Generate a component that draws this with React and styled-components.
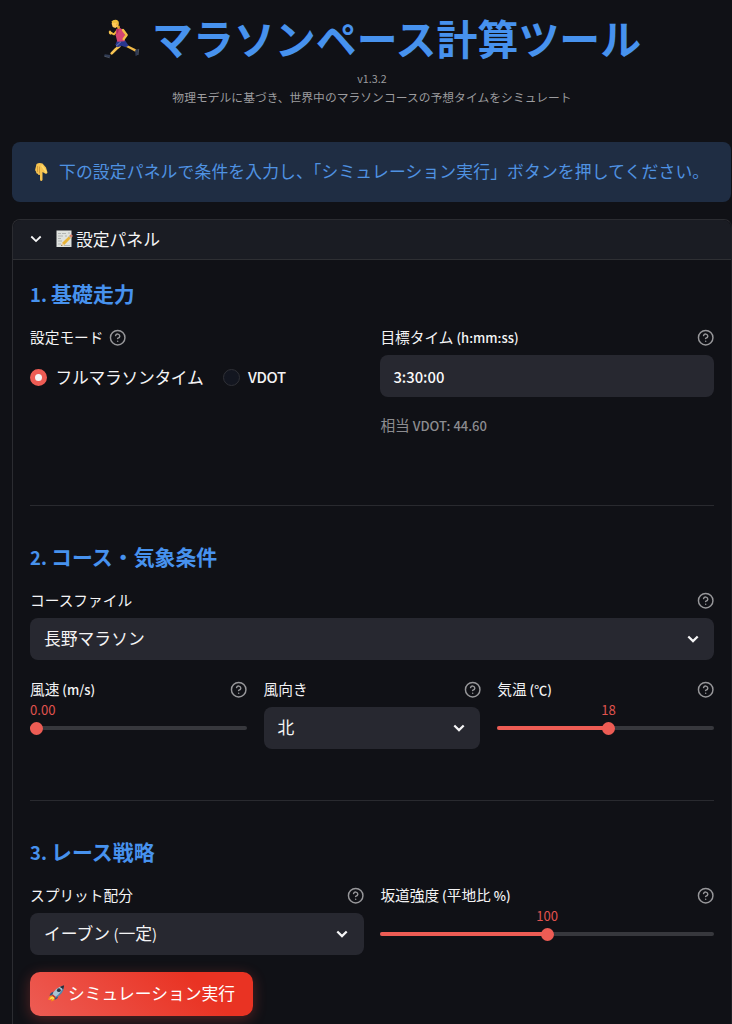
import React, { useState } from 'react'
import styled, { createGlobalStyle } from 'styled-components'

const GlobalStyle = createGlobalStyle`
* {
  box-sizing: border-box;
}
body {
  margin: 0;
  height: 1024px;
  overflow: hidden;
  background: #101116;
  color: #f4f4f5;
  font-family: "Noto Sans CJK JP", "Noto Sans", sans-serif;
  font-size: 16.8px;
}
`
const Page = styled.main`
width: 732px;
height: 1024px;
overflow: hidden;
padding-left: 12px;
display: flex;
flex-direction: column;
`
const Header = styled.header`
height: 142px;
flex: none;
display: flex;
flex-direction: column;
align-items: center;
`
const Title = styled.h1`
margin: 0 0 1px 91px;
height: 69px;
padding-top: 7px;
display: flex;
gap: 12px;
align-items: center;
align-self: flex-start;
color: #4792ee;
font-size: 40.9px;
font-weight: 700;
line-height: 60px;
letter-spacing: 0.05px;
white-space: nowrap;
`
const Caption = styled.p`
margin: 0;
font-size: ${props => props.$size || 11.75}px;
line-height: 18px;
letter-spacing: 0.05px;
color: #9c9c9f;
white-space: nowrap;
`
const Latin = styled.span`
font-size: 0.885em;
font-weight: ${props => props.$weight || 'inherit'};
`
const Notice = styled.div`
height: 60px;
width: 719px;
flex: none;
padding: 0 0 2px 21px;
display: flex;
align-items: center;
gap: 9px;
border-radius: 8px;
background: #1f2d43;
color: #4f92e2;
line-height: 24px;
letter-spacing: 0.15px;
white-space: nowrap;
svg {
  margin-top: 2px;
}
`
const Expander = styled.section`
width: 720px;
height: 900px;
flex: none;
margin-top: 17px;
border: 1px solid #2b2c31;
border-right-color: #1f2025;
border-radius: 8px;
`
const Summary = styled.div`
height: 40px;
padding: 0 17px 2px;
display: flex;
align-items: center;
border-bottom: 1px solid #2e2f33;
border-radius: 8px 8px 0 0;
background: #1a1c23;
line-height: 24px;
svg:first-child {
  margin-right: 14px;
}
svg:nth-child(2) {
  margin-right: 3px;
}
`
const Content = styled.div`
padding: 0 17px;
`
const Section = styled.section`
height: ${props => props.$height}px;
border-bottom: ${props => props.$last ? 'none' : '1px solid #292a2f'};
padding-top: ${props => props.$top}px;
`
const Heading = styled.h2`
margin: 0 0 17px;
font-size: 20.9px;
font-weight: 700;
line-height: 28px;
color: #4792ee;
`
const Columns = styled.div`
display: grid;
grid-template-columns: repeat(${props => props.$count}, 1fr);
column-gap: 16.8px;
margin-top: ${props => props.$top || 0}px;
`
const Field = styled.div`
min-width: 0;
`
const Label = styled.div`
height: 25px;
margin-bottom: ${props => props.$tight ? 0 : 5}px;
padding-bottom: 1px;
display: flex;
align-items: center;
justify-content: ${props => props.$inline ? 'flex-start' : 'space-between'};
gap: 6px;
font-size: 14.7px;
line-height: 22px;
white-space: nowrap;
svg {
  margin: 2px -0.5px 0 0;
}
`
const Input = styled.input`
display: block;
width: 100%;
height: 42px;
padding: 0 13px;
border: none;
outline: none;
border-radius: 8px;
background: #272830;
color: #fafafa;
font-family: inherit;
font-size: 14.8px;
font-weight: 500;
`
const SelectBox = styled.div`
height: 42px;
padding: 0 15.5px 2px 14px;
display: flex;
align-items: center;
justify-content: space-between;
border-radius: 8px;
background: #272830;
white-space: nowrap;
span {
  line-height: 24px;
}
svg {
  margin-top: 2px;
}
`
const Equivalent = styled.p`
margin: 17px 0 0;
font-size: 14.7px;
line-height: 22px;
color: #8c8c90;
`
const RadioGroup = styled.div`
height: 42px;
padding-top: 2px;
display: flex;
align-items: center;
gap: 19px;
`
const RadioLabel = styled.label`
display: flex;
align-items: center;
gap: 8.5px;
cursor: pointer;
line-height: 24px;
letter-spacing: -0.3px;
`
const RadioDot = styled.span`
width: 17px;
height: 17px;
border-radius: 50%;
border: ${props => props.$checked ? '5.5px solid #ed5c54' : '1px solid #2f3036'};
background: ${props => props.$checked ? '#f4f4f5' : '#131620'};
`
const SliderValue = styled.div`
height: 16px;
display: flex;
font-size: 13.1px;
line-height: 16px;
color: #e0534e;
span {
  transform: ${props => props.$start ? 'none' : 'translateX(-50%)'};
}
`
const Track = styled.div`
height: 4px;
margin-top: 8px;
display: flex;
align-items: center;
border-radius: 2px;
background: #37383d;
`
const Filled = styled.div`
height: 4px;
border-radius: 2px;
background: #ed5c54;
`
const Thumb = styled.div`
width: 13px;
height: 13px;
flex: none;
margin: 0 -6.5px;
border-radius: 50%;
background: #ed5c54;
`
const RunButton = styled.button`
margin-top: 17px;
width: 223px;
height: 44px;
padding: 0 0 2px;
display: flex;
align-items: center;
justify-content: center;
gap: 3px;
border: none;
border-radius: 10px;
background: linear-gradient(45deg, #ed5c54, #e93323 75%);
box-shadow: 0 3px 14px rgba(237, 75, 65, 0.32);
color: #ffffff;
font-family: inherit;
font-size: 16.8px;
white-space: nowrap;
cursor: pointer;
`

function HelpIcon() {
  return (
    <svg width="17.4" height="17.4" viewBox="0 0 24 24" fill="none" stroke="#97979a" strokeWidth="2" strokeLinecap="round" strokeLinejoin="round">
      <circle cx="12" cy="12" r="10" />
      <path d="M9.09 9a3 3 0 0 1 5.83 1c0 2-3 3-3 3" />
      <path d="M12 17h.01" />
    </svg>
  )
}

function Chevron({ width = 2.2 }) {
  return (
    <svg width="12" height="8" viewBox="0 0 12 8" fill="none" stroke="#f6f6f7" strokeWidth={width}>
      <path d="M1.3 1.5 6 6.1l4.7-4.6" />
    </svg>
  )
}

function RunnerIcon() {
  return (
    <svg width="37" height="41" viewBox="24 24 111 123" fill="none" strokeLinecap="round" strokeLinejoin="round">
      <path d="M66 62 57 73 47 68" stroke="#eeb43c" strokeWidth="6" />
      <path d="M41 65 45 61 51 68 48 74 43 72Z" fill="#f7c44e" />
      <path d="M95 108 107 114 121 121" stroke="#f1ba47" strokeWidth="7" />
      <path d="M73 109 63 117 50 130" stroke="#f7c453" strokeWidth="8" />
      <path d="m121 119 8-2-1 17-6 5-1-8Z" fill="#303b54" />
      <path d="m29 133 17 2-1 7-17-4Z" fill="#303b54" />
      <path d="m29 139 14 4M131 118l-2 16" stroke="#8592a6" strokeWidth="1.5" />
      <path d="M66 92 90 91 101 107 92 112 80 107 68 112 61 104Z" fill="#29378e" />
      <path d="m77 96-13 12" stroke="#7185bd" strokeWidth="3" />
      <path d="M64 57 75 54 85 59 91 77 89 94 67 95 62 76Z" fill="#d44472" />
      <path d="m65 57 7-3-2 12-5 8Z" fill="#b32b62" />
      <path d="m84 60 11 15-9 12" stroke="#f3bd46" strokeWidth="7" />
      <path d="m64 48 10-1 1 8-6 3Z" fill="#dfa02e" />
      <path d="M52 33 61 31 70 34 70 48 61 54 53 51 50 41Z" fill="#ffc957" />
      <path d="M49 35q7-8 17-5 8 5 4 17l-4-2v-7l-13 1Z" fill="#eebe39" />
      <path d="m64 41 3-1v6l-4 1Z" fill="#e8a23b" />
    </svg>
  )
}

function PointDownIcon() {
  return (
    <svg width="17" height="20" viewBox="0 0 17 20">
      <path d="M3.500 2Q6 .2 9.500 1.500l3.500 4 1.500 5q-.5 2-2.500 1l-2.500-1.500v8q-.8 1.700-2 .8-.5-.5-.5-1.800V12.500Q5.500 14 4.800 11.800 3 12 3 9.500 2 9 2.200 7.500Z" fill="#f6c350" />
      <path d="M4.500 4.500v5M6.500 5v6" stroke="#cc9235" strokeWidth=".8" strokeLinecap="round" />
      <path d="m9 4 3.500 5 .5 1.300" fill="none" stroke="#ffdb6c" strokeWidth="1.600" strokeLinecap="round" />
    </svg>
  )
}

function MemoIcon() {
  return (
    <svg width="17" height="18" viewBox="0 0 17 18">
      <rect x=".5" y=".5" width="15" height="16.500" fill="#dfe2df" />
      <path d="M2 3.500h3M6 3.500h4M12 3h2M2 6h5M9 6h2M2 8.500h3M2 11h4M2 14h3M8 15.500h6" stroke="#a4aaa8" strokeWidth=".8" />
      <path d="m14.300 5 1.900 1.800-7.700 8-3.200 1.200.9-3.300Z" fill="#e9b437" />
      <path d="m13.300 5.900 1.300-1.300q1.200-.5 2 .8l.1.900-1.300 1.300Z" fill="#db806c" />
      <path d="m12.600 6.600.8-.8 2 1.900-.8.8Z" fill="#b2b9bd" />
      <path d="m6.200 12.700 2.200 2.100L5.300 16Z" fill="#edcfa0" />
      <path d="m5.600 15 .8.700-1.300.4Z" fill="#3c3b38" />
    </svg>
  )
}

function RocketIcon() {
  return (
    <svg width="17" height="17" viewBox="0 0 18 18">
      <path d="M5 10Q1 11 0 16l4-1-1 2.500Q8 17 8 13Z" fill="#f58a1c" />
      <path d="M5 12q-3 1-3.500 3.500L5 14l-1 2q3-1 3-3.500Z" fill="#ffe24a" />
      <path d="m6 7-3 1.500-1.500 3L5 10.500ZM11 11l-1 3-3 2 .5-3.500Z" fill="#30547d" />
      <path d="M4.500 10.500Q7 3 16.500.5 17 8 8 13.500Z" fill="#a9c4d4" />
      <path d="M7.500 12.800Q14.500 8 16.300 1 17.500 9 8 13.500Z" fill="#5685a9" />
      <path d="M12.500 2Q14.500.8 17 .3q0 2.200-.8 4.200Z" fill="#292d38" />
      <circle cx="11.500" cy="5.500" r="2" fill="#26394b" />
      <path d="m4.500 10.500 3.500 3" stroke="#bd3433" strokeWidth="1.700" />
    </svg>
  )
}

function FieldLabel({ children, help = true, inline, tight }) {
  return (
    <Label $inline={inline} $tight={tight}>
      <span>{children}</span>
      {help && <HelpIcon />}
    </Label>
  )
}

function Select({ label, children }) {
  return (
    <Field>
      <FieldLabel>{label}</FieldLabel>
      <SelectBox>
        <span>{children}</span>
        <Chevron />
      </SelectBox>
    </Field>
  )
}

function Slider({ label, value, min, max }) {
  const ratio = (Number(value) - min) / (max - min)
  // the thumb stays inside both ends of the track
  const place = `calc(6.3px + (100% - 12.6px) * ${ratio})`

  return (
    <Field>
      <FieldLabel tight>{label}</FieldLabel>
      <SliderValue $start={ratio === 0}>
        <span style={{ marginLeft: ratio === 0 ? 0 : place }}>{value}</span>
      </SliderValue>
      <Track>
        <Filled style={{ width: place }} />
        <Thumb />
      </Track>
    </Field>
  )
}

function App() {
  const [mode, setMode] = useState('time')
  const [time, setTime] = useState('3:30:00')

  return (
    <Page>
      <GlobalStyle />
      <Header>
        <Title><RunnerIcon />マラソンペース計算ツール</Title>
        <Caption $size={10.7}>v1.3.2</Caption>
        <Caption>物理モデルに基づき、世界中のマラソンコースの予想タイムをシミュレート</Caption>
      </Header>

      <Notice>
        <PointDownIcon />
        <span>下の設定パネルで条件を入力し、「シミュレーション実行」ボタンを押してください。</span>
      </Notice>

      <Expander>
        <Summary>
          <Chevron width={1.8} />
          <MemoIcon />
          <span>設定パネル</span>
        </Summary>
        <Content>
          <Section $height={246} $top={19}>
            <Heading><Latin>1. </Latin>基礎走力</Heading>
            <Columns $count={2}>
              <Field>
                <FieldLabel inline>設定モード</FieldLabel>
                <RadioGroup>
                  <RadioLabel onClick={() => setMode('time')}>
                    <RadioDot $checked={mode === 'time'} />
                    フルマラソンタイム
                  </RadioLabel>
                  <RadioLabel onClick={() => setMode('vdot')}>
                    <RadioDot $checked={mode === 'vdot'} />
                    <Latin $weight={500}>VDOT</Latin>
                  </RadioLabel>
                </RadioGroup>
              </Field>
              <Field>
                <FieldLabel>目標タイム<Latin $weight={500}> (h:mm:ss)</Latin></FieldLabel>
                <Input value={time} onChange={e => setTime(e.target.value)} />
                <Equivalent>相当<Latin $weight={500}> VDOT: 44.60</Latin></Equivalent>
              </Field>
            </Columns>
          </Section>

          <Section $height={295} $top={36}>
            <Heading><Latin>2. </Latin>コース・気象条件</Heading>
            <Select label="コースファイル">長野マラソン</Select>
            <Columns $count={3} $top={17}>
              <Slider label={<>風速<Latin $weight={500}> (m/s)</Latin></>} value="0.00" min={0} max={10} />
              <Select label="風向き">北</Select>
              <Slider label={<>気温<Latin $weight={500}> (℃)</Latin></>} value="18" min={0} max={35} />
            </Columns>
          </Section>

          <Section $last $height={300} $top={36}>
            <Heading><Latin>3. </Latin>レース戦略</Heading>
            <Columns $count={2}>
              <Select label="スプリット配分">イーブン<Latin> (</Latin>一定<Latin>)</Latin></Select>
              <Slider label={<>坂道強度<Latin $weight={500}> (</Latin>平地比<Latin $weight={500}> %)</Latin></>} value="100" min={0} max={200} />
            </Columns>
            <RunButton><RocketIcon />シミュレーション実行</RunButton>
          </Section>
        </Content>
      </Expander>
    </Page>
  )
}

export default App
